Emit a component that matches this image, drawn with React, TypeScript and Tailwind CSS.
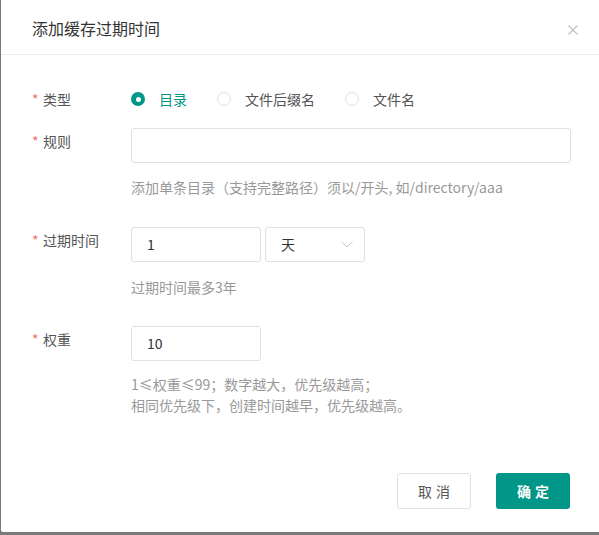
import React from "react";

const font = { fontFamily: '"Noto Sans CJK SC", "Noto Sans", sans-serif' };

function Label({ children }: { children: React.ReactNode }) {
  return (
    <div className="w-[99px] shrink-0 flex items-start pt-[3px] text-[14px] leading-[20px] text-[#555]">
      <span className="text-[#f56c6c] w-[11px] shrink-0">*</span>
      <span>{children}</span>
    </div>
  );
}

function Radio({ checked, label }: { checked?: boolean; label: string }) {
  return (
    <div className="flex items-center">
      {checked ? (
        <span className="w-[14px] h-[14px] rounded-full bg-[#009688] flex items-center justify-center">
          <span className="w-[5px] h-[5px] rounded-full bg-white" />
        </span>
      ) : (
        <span className="w-[14px] h-[14px] rounded-full border border-[#dcdfe6] bg-white" />
      )}
      <span
        className={
          "ml-[14px] text-[14px] leading-[20px] " +
          (checked ? "text-[#009688]" : "text-[#555]")
        }
      >
        {label}
      </span>
    </div>
  );
}

export default function App() {
  return (
    <div className="w-[599px] h-[535px] bg-[#7a7a7a] pl-[1px] overflow-hidden" style={font}>
      <div className="h-[532px] bg-white rounded-bl-[2px] flex flex-col">
        <div className="h-[55px] shrink-0 border-b border-[#ebebeb] pl-[31px] pr-[21px] flex items-center justify-between">
          <span className="text-[16px] leading-[22px] text-[#333] pt-[2px]">添加缓存过期时间</span>
          <svg width="10" height="10" viewBox="0 0 10 10" className="mt-[5px]">
            <path d="M0.5 0.5 L9.5 9.5 M9.5 0.5 L0.5 9.5" stroke="#bfbfbf" strokeWidth="1.1" fill="none" />
          </svg>
        </div>

        <div className="pl-[31px] pr-[28px] pt-[26px] flex flex-col">
          {/* 类型 */}
          <div className="flex h-[36px] items-center">
            <div className="w-[99px] shrink-0 flex items-center text-[14px] leading-[20px] text-[#555]">
              <span className="text-[#f56c6c] w-[11px] shrink-0">*</span>
              <span>类型</span>
            </div>
            <div className="flex items-center gap-[30px]">
              <Radio checked label="目录" />
              <Radio label="文件后缀名" />
              <Radio label="文件名" />
            </div>
          </div>

          {/* 规则 */}
          <div className="flex mt-[11px]">
            <Label>规则</Label>
            <div className="flex-1 flex flex-col">
              <div className="h-[35px] w-[440px] border border-[#dcdfe6] rounded-[3px] bg-white" />
              <div className="mt-[14px] text-[14px] leading-[20px] text-[#999]">
                添加单条目录（支持完整路径）须以/开头, 如/directory/aaa
              </div>
            </div>
          </div>

          {/* 过期时间 */}
          <div className="flex mt-[30px]">
            <Label>过期时间</Label>
            <div className="flex-1 flex flex-col">
              <div className="flex gap-[4px]">
                <div className="h-[35px] w-[130px] border border-[#dcdfe6] rounded-[3px] flex items-center pl-[15px] text-[14px] text-[#333]">
                  1
                </div>
                <div className="h-[35px] w-[100px] border border-[#dcdfe6] rounded-[3px] flex items-center justify-between pl-[15px] pr-[11px] text-[14px] text-[#333]">
                  <span>天</span>
                  <svg width="12" height="7" viewBox="0 0 12 7">
                    <path d="M0.5 0.8 L6 6 L11.5 0.8" stroke="#c0c4cc" strokeWidth="1" fill="none" />
                  </svg>
                </div>
              </div>
              <div className="mt-[15px] text-[14px] leading-[20px] text-[#999]">过期时间最多3年</div>
            </div>
          </div>

          {/* 权重 */}
          <div className="flex mt-[29px]">
            <Label>权重</Label>
            <div className="flex-1 flex flex-col">
              <div className="h-[35px] w-[130px] border border-[#dcdfe6] rounded-[3px] flex items-center pl-[15px] text-[14px] text-[#333]">
                10
              </div>
              <div className="mt-[13px] text-[14px] leading-[21px] text-[#999]">
                <div>1≤权重≤99；数字越大，优先级越高；</div>
                <div>相同优先级下，创建时间越早，优先级越高。</div>
              </div>
            </div>
          </div>
        </div>

        <div className="mt-auto pb-[23px] pr-[29px] flex justify-end gap-[25px]">
          <button className="w-[74px] h-[36px] border border-[#dcdfe6] rounded-[3px] bg-white text-[14px] text-[#555] tracking-[4px] pl-[4px]">
            取消
          </button>
          <button className="w-[74px] h-[36px] rounded-[3px] bg-[#009688] text-[14px] text-white font-bold tracking-[4px] pl-[4px]">
            确定
          </button>
        </div>
      </div>
    </div>
  );
}
